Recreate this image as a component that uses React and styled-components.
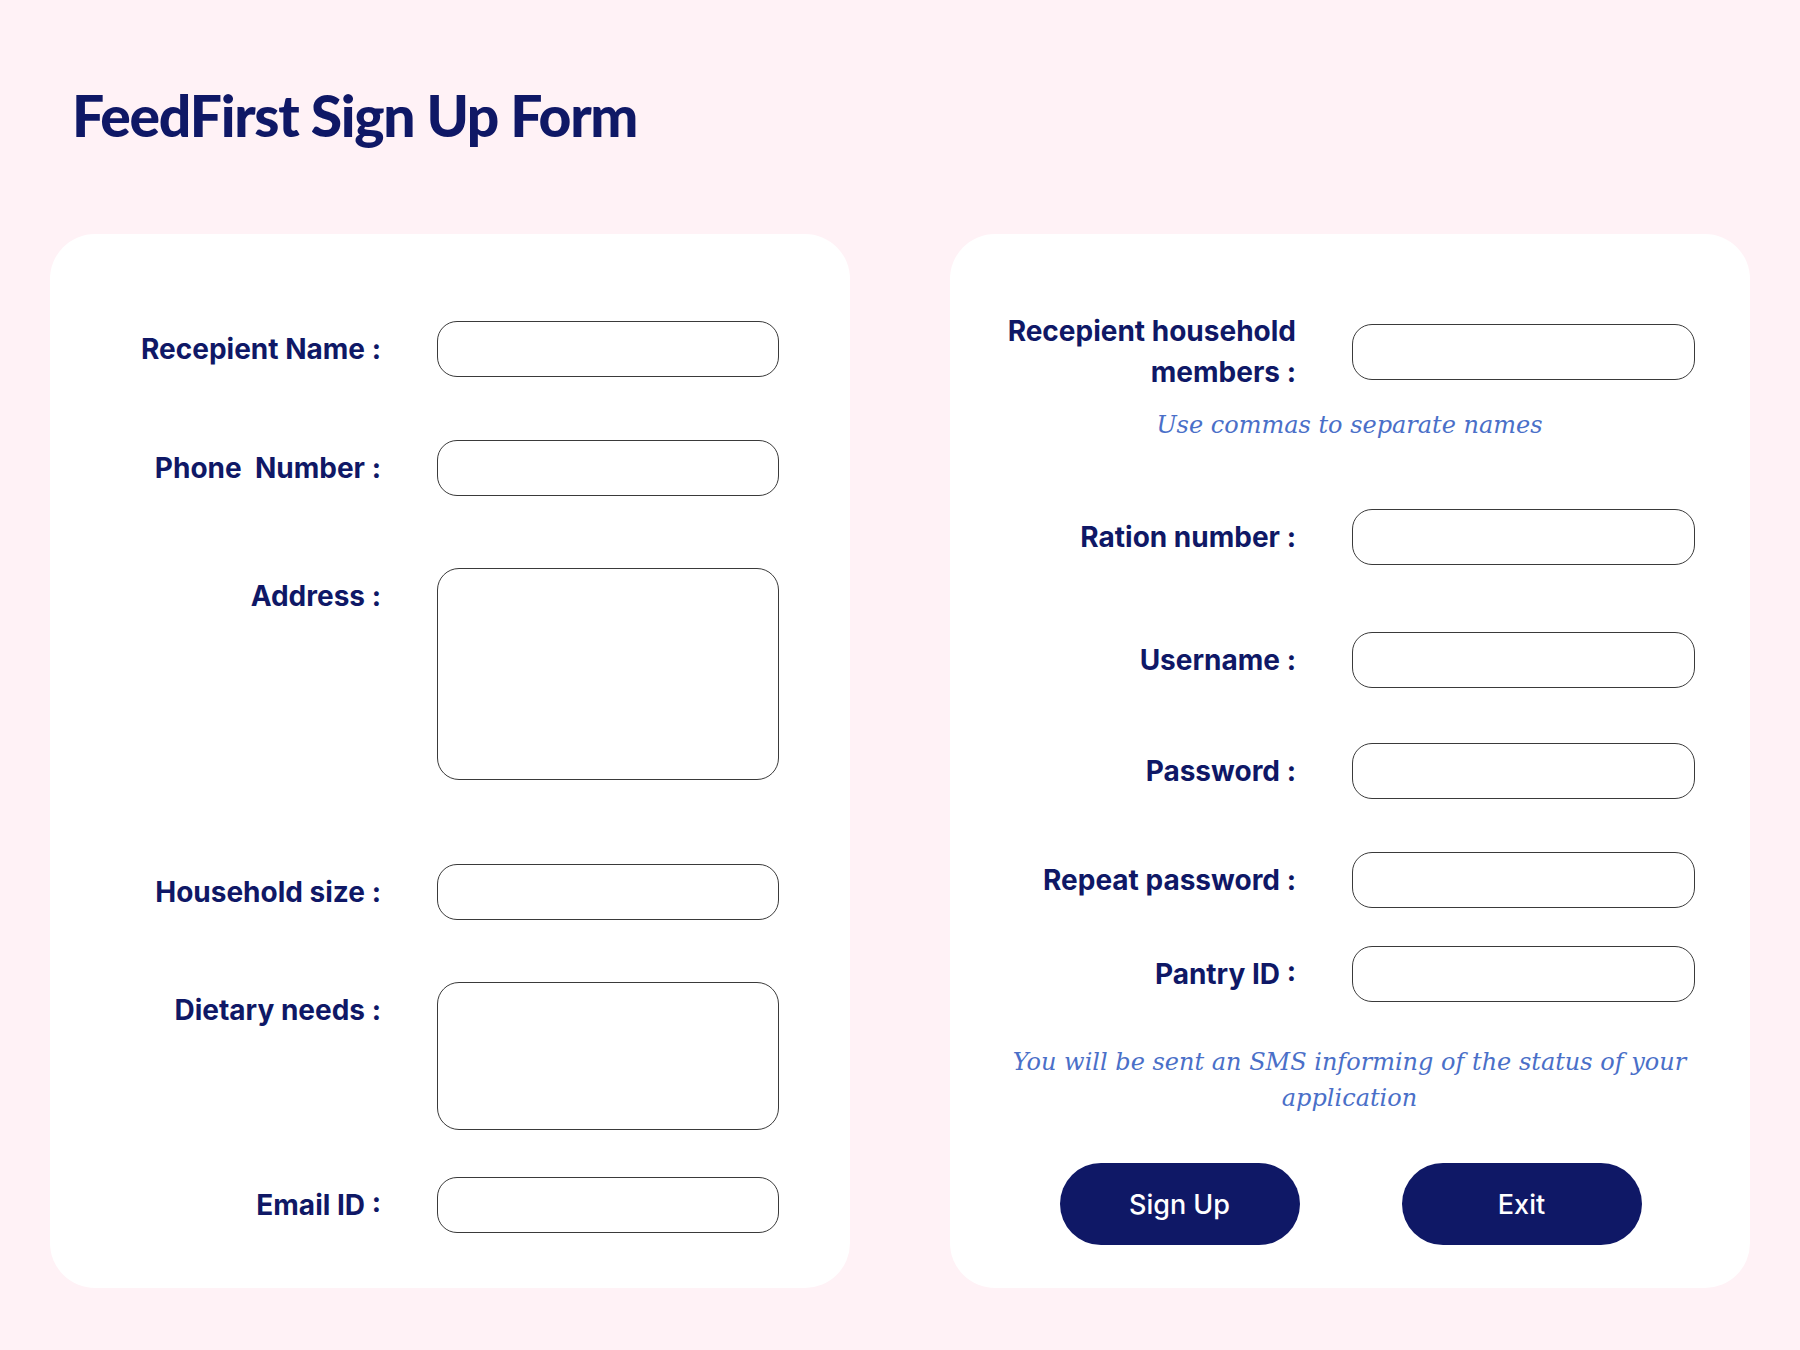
import React from "react";
import styled, { createGlobalStyle } from "styled-components";

const navy = "#0f1866";

const leftFields = [
  { label: "Recepient Name :", tall: 0, gap: 0 },
  { label: "Phone  Number :", tall: 0, gap: 63 },
  { label: "Address :", tall: 212, gap: 72 },
  { label: "Household size :", tall: 0, gap: 84 },
  { label: "Dietary needs :", tall: 148, gap: 62 },
  { label: "Email ID :", tall: 0, gap: 47 },
];

const rightFields = [
  { label: "Ration number :", gap: 66 },
  { label: "Username :", gap: 67 },
  { label: "Password :", gap: 55 },
  { label: "Repeat password :", gap: 53 },
  { label: "Pantry ID :", gap: 38 },
];

function App() {
  return (
    <>
      <GlobalStyle />
      <Page>
        <Title>FeedFirst Sign Up Form</Title>
        <Panels>
          <Panel $pad="87px 71px 56px 0">
            {leftFields.map((f) => (
              <Field key={f.label} $cols="331px" $gap={f.gap}>
                <Label>{f.label}</Label>
                {f.tall ? <Area $h={f.tall} /> : <Input />}
              </Field>
            ))}
          </Panel>

          <Panel $pad="77px 55px 44px 0">
            <Field $cols="346px" $center>
              <Label $multi>
                Recepient household
                <br />
                members :
              </Label>
              <Input />
            </Field>
            <Note $mt={14}>Use commas to separate names</Note>
            {rightFields.map((f) => (
              <Field key={f.label} $cols="346px" $gap={f.gap}>
                <Label>{f.label}</Label>
                <Input />
              </Field>
            ))}
            <Note $mt={42} $wide>
              You will be sent an SMS informing of the status of your application
            </Note>
            <Buttons>
              <Button type="button">Sign Up</Button>
              <Button type="button">Exit</Button>
            </Buttons>
          </Panel>
        </Panels>
      </Page>
    </>
  );
}

export default App;

const GlobalStyle = createGlobalStyle`
  * { box-sizing: border-box; }
  body {
    margin: 0;
    background: #fff2f6;
    font-family: Inter, "Liberation Sans", sans-serif;
  }
`;

const Page = styled.div`
  width: 1800px;
  height: 1350px;
  padding: 80px 50px 0 50px;
`;

const Title = styled.h1`
  margin: 0 0 83px 22px;
  font-family: Lato, "Liberation Sans", sans-serif;
  font-weight: 900;
  font-size: 57px;
  line-height: 1.25;
  letter-spacing: -1.3px;
  color: ${navy};
`;

const Panels = styled.div`
  display: flex;
  gap: 100px;
`;

const Panel = styled.section`
  width: 800px;
  height: 1054px;
  background: #ffffff;
  border-radius: 45px;
  padding: ${(p) => p.$pad};
  display: flex;
  flex-direction: column;
`;

const Field = styled.div`
  display: grid;
  grid-template-columns: ${(p) => p.$cols} 1fr;
  column-gap: 56px;
  align-items: ${(p) => (p.$center ? "center" : "start")};
  margin-top: ${(p) => p.$gap || 0}px;
`;

const Label = styled.label`
  text-align: right;
  white-space: pre;
  font-weight: 700;
  font-size: 28px;
  letter-spacing: 0;
  color: ${navy};
  line-height: ${(p) => (p.$multi ? "41px" : "56px")};
`;

const Input = styled.input`
  display: block;
  width: 100%;
  height: 56px;
  border: 1px solid #3a3a3a;
  border-radius: 20px;
  background: #fff;
  outline: none;
  padding: 0 18px;
  font: inherit;
`;

const Area = styled.textarea`
  display: block;
  width: 100%;
  height: ${(p) => p.$h}px;
  border: 1px solid #3a3a3a;
  border-radius: 22px;
  background: #fff;
  outline: none;
  resize: none;
  padding: 14px 18px;
  font: inherit;
`;

const Note = styled.p`
  margin: ${(p) => p.$mt}px auto 0 auto;
  max-width: ${(p) => (p.$wide ? "680px" : "none")};
  text-align: center;
  font-family: "DejaVu Serif", "Liberation Serif", serif;
  font-style: italic;
  font-size: 24px;
  line-height: 36px;
  color: #4a6fc8;
  transform: translateX(27px);
`;

const Buttons = styled.div`
  display: flex;
  justify-content: center;
  gap: 102px;
  margin-top: 47px;
  transform: translateX(28px);
`;

const Button = styled.button`
  width: 240px;
  height: 82px;
  border: none;
  border-radius: 41px;
  background: ${navy};
  color: #fff;
  font-family: Inter, "Liberation Sans", sans-serif;
  font-weight: 500;
  font-size: 27px;
  cursor: pointer;
`;
